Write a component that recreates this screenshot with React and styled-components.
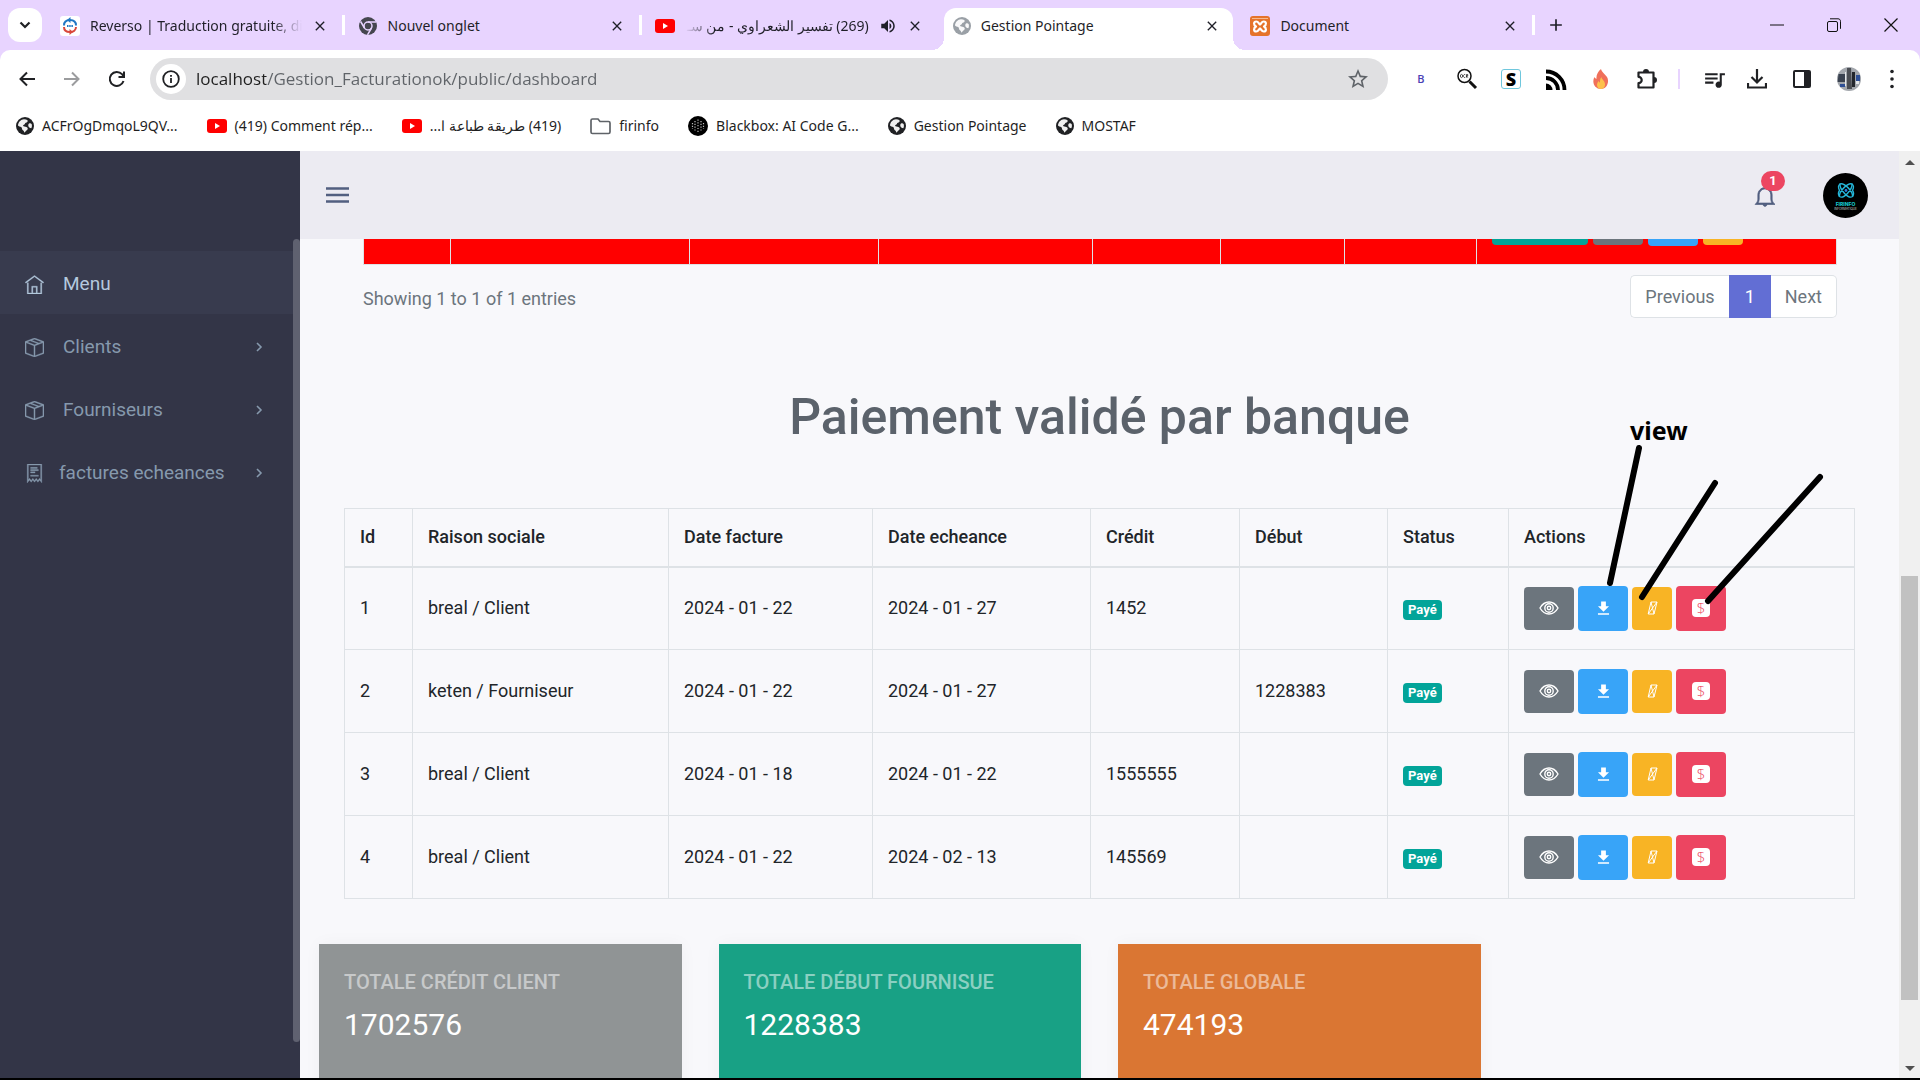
import React from "react";
import styled, { createGlobalStyle, css } from "styled-components";
import { TfiHome, TfiPackage, TfiReceipt, TfiBell } from "react-icons/tfi";
import { MdStarBorder, MdQueueMusic, MdVolumeUp, MdClose, MdAdd } from "react-icons/md";

const ui = `"Noto Sans", "Open Sans", sans-serif`;
const body = `Roboto, "Liberation Sans", sans-serif`;

const Global = createGlobalStyle`
  *, *::before, *::after { box-sizing: border-box; }
  body { margin: 0; background: #000; font-family: ${body}; }
  button, input { font: inherit; color: inherit; }
  button { border: 0; padding: 0; background: none; cursor: pointer; }
  a { color: inherit; text-decoration: none; }
  svg { display: block; flex: none; }
`;

const Window = styled.div`
  height: 100vh;
  display: flex;
  flex-direction: column;
  overflow: hidden;
  border-bottom: 2px solid #000;
  background: #fff;
`;

/* ---------- browser tabs ---------- */

const TabStrip = styled.div`
  display: flex;
  align-items: flex-start;
  height: 50px;
  padding-top: 8px;
  background: #e8d4ff;
  font-family: ${ui};
  font-size: 14px;
  color: #1f1f28;
`;

const TabSearch = styled.button`
  width: 34px;
  height: 34px;
  margin: 0 5px 0 8px;
  display: grid;
  place-items: center;
  border-radius: 12px;
  background: #fff;
`;

const Tabs = styled.div`
  display: flex;
  flex: 0 1 1488px;
  min-width: 0;
  height: 42px;
`;

const TabItem = styled.div`
  position: relative;
  flex: 1;
  min-width: 0;
  height: 42px;
  display: flex;
  align-items: center;
  padding: 0 17px 7px 13px;
  ${(p) =>
    p.$line &&
    css`
      &::after {
        content: "";
        position: absolute;
        right: 0;
        top: 7px;
        width: 3px;
        height: 20px;
        background: #fff;
      }
    `}
  ${(p) =>
    p.$active &&
    css`
      &::before {
        content: "";
        position: absolute;
        inset: 0 4px 0 4px;
        border-radius: 12px 12px 0 0;
        background: #fff;
      }
      &::after {
        content: "";
        position: absolute;
        left: -8px;
        right: -8px;
        bottom: 0;
        height: 12px;
        background:
          radial-gradient(circle at 0 0, transparent 12px, #fff 12px) left / 12px 12px no-repeat,
          radial-gradient(circle at 100% 0, transparent 12px, #fff 12px) right / 12px 12px no-repeat;
      }
    `}
`;

const TabLink = styled.a`
  position: relative;
  z-index: 1;
  flex: 1;
  min-width: 0;
  display: flex;
  align-items: center;
  gap: 10px;
`;

const TabTitle = styled.span`
  flex: 1;
  min-width: 0;
  overflow: hidden;
  white-space: nowrap;
  line-height: 24px;
  mask-image: ${(p) =>
    p.$fade === "right"
      ? "linear-gradient(to left, transparent, #000 30px)"
      : p.$fade === "left"
        ? "linear-gradient(to right, transparent, #000 30px)"
        : "none"};
`;

const TabClose = styled.button`
  position: relative;
  z-index: 1;
  width: 16px;
  height: 16px;
  margin-left: 10px;
`;

const NewTab = styled.button`
  width: 20px;
  height: 20px;
  margin: 7px 0 0 11px;
`;

const WindowControls = styled.div`
  display: flex;
  gap: 39px;
  margin: 7px 20px 0 auto;
`;

const ControlButton = styled.button`
  width: 18px;
  height: 20px;
  display: grid;
  place-items: center;
`;

/* ---------- address bar ---------- */

const ToolbarBack = styled.div`
  background: #e8d4ff;
`;

const Toolbar = styled.div`
  display: flex;
  align-items: center;
  height: 58px;
  padding: 0 18px 0 17px;
  border-radius: 10px 10px 0 0;
  background: #fff;
`;

const NavButtons = styled.div`
  display: flex;
  gap: 25px;
  margin-right: 23px;
`;

const IconButton = styled.button`
  width: 20px;
  height: 24px;
  display: grid;
  place-items: center;
  color: ${(p) => p.$color || "#202124"};
`;

const Omnibox = styled.label`
  flex: 1;
  height: 42px;
  display: flex;
  align-items: center;
  gap: 10px;
  padding: 0 18px 0 6px;
  border-radius: 21px;
  background: #e0e0e2;
  color: #5f6368;
`;

const SiteInfo = styled.span`
  width: 30px;
  height: 30px;
  display: grid;
  place-items: center;
  border-radius: 50%;
  background: #fff;
`;

const Address = styled.input`
  flex: 1;
  min-width: 0;
  padding: 0;
  border: 0;
  outline: 0;
  font-family: "Open Sans", "Noto Sans", sans-serif;
  font-size: 17px;
  line-height: 24px;
  color: transparent;
  background: linear-gradient(90deg, #1f1f1f 70px, #5f6368 70px);
  background-clip: text;
  -webkit-background-clip: text;
`;

const Extensions = styled.div`
  display: flex;
  align-items: center;
  gap: 25px;
  margin-left: 23px;
`;

const Divider = styled.span`
  width: 2px;
  height: 20px;
  margin: 0 -3px;
  background: #e8d4ff;
`;

const LetterIcon = styled.span`
  width: 20px;
  height: 20px;
  display: grid;
  place-items: center;
  font: ${(p) => (p.$boxed ? "800 18px" : "600 11px")} / 18px "Open Sans", sans-serif;
  color: ${(p) => (p.$boxed ? "#000" : "#4a3fb5")};
  border: ${(p) => (p.$boxed ? "1px solid #6fc7dd" : "0")};
  border-radius: 3px;
`;

/* ---------- bookmarks ---------- */

const Bookmarks = styled.nav`
  display: flex;
  align-items: center;
  gap: 29px;
  height: 43px;
  padding: 0 0 7px 16px;
  background: #fff;
  font-family: ${ui};
  font-size: 14px;
  line-height: 24px;
  color: #1f1f1f;
  white-space: nowrap;
`;

const Bookmark = styled.a`
  display: flex;
  align-items: center;
  gap: 8px;
`;

/* ---------- application ---------- */

const Viewport = styled.div`
  flex: 1;
  min-height: 0;
  display: flex;
`;

const Sidebar = styled.aside`
  flex: 0 0 300px;
  padding-top: 88px;
  background: #333547;
`;

const SideScroll = styled.div`
  display: flex;
  height: 100%;
`;

const Menu = styled.nav`
  flex: 1;
  padding-top: 12px;
`;

const MenuItem = styled.a`
  display: flex;
  align-items: center;
  gap: ${(p) => (p.$tight ? "15px" : "19px")};
  height: 63px;
  padding: 3px 30px 0 25px;
  font-size: 19px;
  line-height: 24px;
  color: ${(p) => (p.$active ? "#b4c9de" : "#8699ad")};
  background: ${(p) => (p.$active ? "#383b4e" : "transparent")};
`;

const MenuText = styled.span`
  flex: 1;
`;

const SideThumb = styled.span`
  width: 7px;
  height: 803px;
  border-radius: 7px;
  background: #5f6170;
`;

const Main = styled.main`
  flex: 1;
  min-width: 0;
  display: flex;
  flex-direction: column;
  background: #f8f8fb;
`;

const Topbar = styled.header`
  display: flex;
  align-items: center;
  flex: none;
  height: 88px;
  padding: 1px 31px 0 26px;
  background: #ecebf2;
  color: #525f80;
`;

const Notifications = styled.button`
  position: relative;
  margin: 0 47px 0 auto;
`;

const Count = styled.span`
  position: absolute;
  left: 7px;
  top: -14px;
  width: 24px;
  height: 20px;
  border-radius: 10px;
  background: #ec4561;
  color: #fff;
  font-size: 13px;
  font-weight: 700;
  line-height: 20px;
`;

const Scroller = styled.div`
  position: relative;
  flex: 1;
  min-height: 0;
  overflow: hidden;
`;

const Scrolled = styled.div`
  margin-top: -58px;
`;

const Pending = styled.section`
  padding: 0 62px 0 63px;
`;

const Paid = styled.section`
  padding: 0 44px;
`;

const DataTable = styled.table`
  width: 100%;
  table-layout: fixed;
  border-collapse: collapse;
  font-size: 18px;
  line-height: 24px;
  color: #212529;
  background: ${(p) => (p.$late ? "#ff0000" : "transparent")};

  th,
  td {
    height: 83px;
    padding: 0 15px;
    border: 1px solid #dee2e6;
    text-align: left;
    vertical-align: middle;
    white-space: nowrap;
  }
  th {
    height: 58px;
    padding-bottom: 1px;
    border-bottom-width: 2px;
    font-weight: 500;
  }
`;

const Badge = styled.span`
  display: inline-block;
  height: 20px;
  padding: 0 5px;
  border-radius: 4px;
  background: #02a499;
  color: #fff;
  font-size: 13px;
  font-weight: 700;
  line-height: 20px;
`;

const Actions = styled.div`
  display: flex;
  align-items: center;
  gap: ${(p) => (p.$wide ? "5px" : "4px")};
`;

const tones = {
  green: "#02a499",
  gray: "#6c757d",
  blue: "#38a4f8",
  yellow: "#f8b425",
  red: "#ec4561",
};

const ActionButton = styled.button`
  display: grid;
  place-items: center;
  width: ${(p) => p.$width || 50}px;
  height: ${(p) => (p.$tall ? 45 : 43)}px;
  border-radius: 4px;
  background: ${(p) => tones[p.$tone]};
  color: #fff;
`;

const Dollar = styled.span`
  width: 18px;
  height: 18px;
  border-radius: 4px;
  background: #fff;
  color: #ec4561;
  font: 300 15px / 18px "Open Sans", sans-serif;
`;

const TableFooter = styled.div`
  display: flex;
  align-items: center;
  justify-content: space-between;
  margin-top: 10px;
  font-size: 18px;
  line-height: 24px;
  color: #6c757d;
`;

const Showing = styled.span`
  padding-top: 5px;
`;

const Pager = styled.nav`
  display: flex;
  height: 43px;
`;

const PageLink = styled.a`
  padding: 9px ${(p) => (p.$active ? 15 : 14)}px;
  border: 1px solid ${(p) => (p.$active ? "#626ed4" : "#dee2e6")};
  background: ${(p) => (p.$active ? "#626ed4" : "#fff")};
  color: ${(p) => (p.$active ? "#fff" : "#6c757d")};
  &:first-child {
    border-right: 0;
    border-radius: 5px 0 0 5px;
  }
  &:last-child {
    border-left: 0;
    border-radius: 0 5px 5px 0;
  }
`;

const Title = styled.h1`
  margin: 69px 0 61px;
  text-align: center;
  font-size: 50px;
  font-weight: 500;
  line-height: 60px;
  color: #5b626b;
`;

const Cards = styled.section`
  display: grid;
  grid-template-columns: repeat(4, 1fr);
  gap: 37px;
  padding: 45px 19px 0;
`;

const cardTones = { gray: "#909495", green: "#18a185", orange: "#da7633" };

const Card = styled.article`
  padding: 24px 25px;
  height: 200px;
  background: ${(p) => cardTones[p.$tone]};
  box-shadow: 0 0 16px rgba(0, 0, 0, 0.04);
`;

const CardLabel = styled.h2`
  margin: 0 0 13px;
  font-size: 20px;
  font-weight: 500;
  line-height: 28px;
  text-transform: uppercase;
  color: rgba(255, 255, 255, 0.5);
`;

const CardValue = styled.p`
  margin: 0;
  font-size: 30px;
  line-height: 32px;
  color: #fff;
`;

/* hand-drawn notes lying over the page */
const Notes = styled.div`
  position: absolute;
  top: 178px;
  right: 79px;
  width: 210px;
  svg { overflow: visible; }
`;

const NoteText = styled.span`
  display: block;
  padding: 0 0 3px 20px;
  font: 700 25px / 26px "Noto Sans", sans-serif;
  color: #000;
`;

const Scrollbar = styled.div`
  flex: 0 0 21px;
  display: flex;
  flex-direction: column;
  align-items: center;
  padding: 9px 0 7px;
  background: #f0f0f0;
  color: #505050;
`;

const Track = styled.div`
  flex: 1;
  display: grid;
  grid-template-rows: 411fr 424fr 66fr;
`;

const Thumb = styled.span`
  grid-row: 2;
  width: 17px;
  background: #c1c1c1;
`;

/* ---------- drawings ---------- */

const Globe = ({ color = "#202124" }) => (
  <svg width="18" height="18" viewBox="0 0 18 18">
    <circle cx="9" cy="9" r="9" fill={color} />
    <path d="M8 2.2c3 .2 4 .8 3.600 2.200-.3 1-1.700 1-2.300 1.700-.5.7-.2 1.300-1.300 1.600-1 .3-1.200 1-.4 1.600 1 .6 2.600.4 3.600 1.200 1.100.9.4 2.400-.8 3.100-1 .6-1 1.900-2.300 2 .2-1.500-.6-2-1.500-2.700-.9-.8-.3-2-1.400-2.800C4.100 9.400 2.600 9.500 2 8.500 2.200 5 4.700 2.500 8 2.200Z" fill="#fff" opacity=".93" />
    <path d="M13 6.500c1-.5 2-.3 2.600.5.500 1.500.4 3-.3 4.300-1.500-.3-2.800-1-3-2.500-.1-1 .1-1.900.7-2.300Z" fill="#fff" opacity=".93" />
  </svg>
);

const YouTube = () => (
  <svg width="20" height="14" viewBox="0 0 20 14">
    <rect width="20" height="14" rx="3" fill="#f00" />
    <path d="M8 4v6l5-3z" fill="#fff" />
  </svg>
);

const Reverso = () => (
  <svg width="20" height="20" viewBox="0 0 20 20">
    <rect width="20" height="20" rx="3" fill="#fff" />
    <path d="M4 9.500C4 6 6.500 4 10 4s6 2 6 5.500" fill="none" stroke="#2178c4" strokeWidth="2" />
    <path d="M10.500 1 7 4l3.500 3z" fill="#2178c4" />
    <path d="M4 11c0 3.500 2.500 5 6 5s6-2 6-5" fill="none" stroke="#d9483b" strokeWidth="2" />
    <path d="M9.500 13 13 16l-3.500 3z" fill="#d9483b" />
    <path d="M7 10h6" stroke="#2178c4" strokeWidth="2" strokeDasharray="1.500 .7" />
  </svg>
);

const ChromeMark = () => (
  <svg width="20" height="20" viewBox="0 0 20 20">
    <circle cx="10" cy="10" r="9" fill="#45464f" />
    <circle cx="10" cy="10" r="4" fill="#45464f" stroke="#e8d4ff" strokeWidth="1.500" />
    <path d="M10 6h8M6.500 12 2.600 5.500M13.500 12 9.500 18.800" stroke="#e8d4ff" strokeWidth="1.500" />
  </svg>
);

const Xampp = () => (
  <svg width="20" height="20" viewBox="0 0 20 20">
    <rect width="20" height="20" rx="3" fill="#e5732a" />
    <path d="M2 2.500h16" stroke="#f6b98e" strokeWidth="1" />
    <path d="M10 8.500C8.500 7.500 8.500 5.500 6.300 5.500 3.500 5.500 3.300 9 6 10.500 3.300 12 3.500 15.500 6.300 15.500c2.200 0 2.200-2 3.700-3 1.500 1 1.500 3 3.700 3 2.800 0 3-3.500.3-5 2.700-1.500 2.500-5-.3-5-2.200 0-2.200 2-3.700 3Z" fill="none" stroke="#fff" strokeWidth="2.200" strokeLinejoin="round" />
  </svg>
);

const Folder = () => (
  <svg width="21" height="18" viewBox="0 0 21 18">
    <path d="M1 3.500C1 2.500 1.700 2 2.500 2H8l2 2.500h8.500c.8 0 1.500.5 1.500 1.500v9c0 .8-.7 1.500-1.500 1.500h-16C1.700 16.500 1 15.800 1 15z" fill="none" stroke="#5f6368" strokeWidth="1.700" />
  </svg>
);

const Blackbox = () => (
  <svg width="20" height="20" viewBox="0 0 20 20">
    <circle cx="10" cy="10" r="10" fill="#000" />
    <g stroke="#bbb" strokeWidth="1.200" strokeDasharray="1.200 1.600">
      <path d="M10 3.500v13M7 5v10M13 5v10M4.500 7v6M15.500 7v6" />
    </g>
  </svg>
);

const Arrow = ({ flip }) => (
  <svg width="18" height="16" viewBox="0 0 18 16" fill="none" stroke="currentColor" strokeWidth="2">
    <path d={flip ? "M1 8h14.500M9 1.500 15.500 8 9 14.500" : "M17 8H2.500M9 1.500 2.500 8 9 14.500"} />
  </svg>
);

const Reload = () => (
  <svg width="18" height="18" viewBox="0 0 18 18" fill="none" stroke="currentColor" strokeWidth="2">
    <path d="M15.500 11A7 7 0 1 1 14 4.200L15.500 6" />
    <path d="M16 1.500V7h-5.500" />
  </svg>
);

const InfoMark = () => (
  <svg width="18" height="18" viewBox="0 0 18 18" fill="none" stroke="#202124" strokeWidth="1.800">
    <circle cx="9" cy="9" r="7.800" />
    <path d="M9 8v5M9 5v1.800" />
  </svg>
);

const Lens = () => (
  <svg width="22" height="22" viewBox="0 0 22 22" fill="none" stroke="#111">
    <circle cx="8.500" cy="8" r="6.500" strokeWidth="1.500" fill="#fff" />
    <path d="M13.500 13.500 20 20" strokeWidth="3" />
    <g strokeWidth=".7">
      <ellipse cx="5.500" cy="8" rx="1.100" ry="1.600" />
      <path d="M9.300 6.700a1.300 1.500 0 1 0 0 2.600M10.500 9.600V6.500h1.200v1.500h-1.200l1.300 1.600" />
    </g>
  </svg>
);

const Feed = () => (
  <svg width="21" height="21" viewBox="0 0 21 21" fill="none" stroke="#000" strokeWidth="3.800">
    <path d="M0 2.500A18.500 18.500 0 0 1 18.500 21M0 9A12 12 0 0 1 12 21" />
    <path d="M0 14.500A6.500 6.500 0 0 1 6.500 21H0z" fill="#000" stroke="none" />
  </svg>
);

const Flame = () => (
  <svg width="18" height="20" viewBox="0 0 18 20">
    <path d="M9 0c.5 3 4 5 6 8 2.500 4 .5 12-6 12S-.5 13 2.500 8C3 9 3.500 9.500 4.500 10 4 6 6 2.500 9 0Z" fill="#f0705a" />
    <path d="M9.500 8c0 2.500 4 4 3.500 8-.3 2.500-2 4-4 4s-4-1.500-4-4c0-2 1-3 1.500-4 .5 1 1 1.500 1.500 1.500C8 11.500 8 9.500 9.500 8Z" fill="#fdc14b" />
  </svg>
);

const Puzzle = () => (
  <svg width="22" height="22" viewBox="0 0 22 22">
    <path d="M2.500 4.500h15v15h-15v-4.300a3.200 3.200 0 0 0 0-6.400z" fill="none" stroke="#202124" strokeWidth="2.200" strokeLinejoin="round" />
    <path d="M7 4a3 3 0 0 1 6 0zM18 9a3 3 0 0 1 0 6z" fill="#202124" />
  </svg>
);

const Tray = () => (
  <svg width="20" height="20" viewBox="0 0 20 20" fill="none" stroke="currentColor" strokeWidth="2.200">
    <path d="M10 0v13M4.500 8 10 13.500 15.500 8M1 14v4.500h18V14" />
  </svg>
);

const Panel = () => (
  <svg width="18" height="18" viewBox="0 0 18 18">
    <rect x="1" y="1" width="16" height="16" rx="1" fill="none" stroke="#202124" strokeWidth="2" />
    <path d="M11 1h6v16h-6z" fill="#202124" />
  </svg>
);

const Avatar = () => (
  <svg width="24" height="24" viewBox="0 0 24 24">
    <circle cx="12" cy="12" r="12" fill="#a3a7ad" />
    <path d="M1.500 7H8v8H.6z" fill="#3a4250" />
    <path d="M10 1h4l1 21h-5z" fill="#4a4d53" />
    <path d="M15 5h3v15h-3z" fill="#23262c" />
    <path d="M3 17h5v3H3zM19 8h4v6h-4z" fill="#2e4f95" />
    <path d="M8 5h1v14H8zM19 14h3v3h-3z" fill="#e5e7ea" />
  </svg>
);

const Dots = () => (
  <svg width="6" height="20" viewBox="0 0 6 20" fill="#202124">
    <circle cx="3" cy="2.500" r="1.800" />
    <circle cx="3" cy="10" r="1.800" />
    <circle cx="3" cy="17.500" r="1.800" />
  </svg>
);

const Burger = () => (
  <svg width="23" height="17" viewBox="0 0 23 17" stroke="#525f80" strokeWidth="2.400">
    <path d="M0 1.500h23M0 8h23M0 14.500h23" />
  </svg>
);

const Brand = () => (
  <svg width="45" height="45" viewBox="0 0 45 45">
    <circle cx="22.500" cy="22.500" r="22.500" fill="#000" />
    <g fill="none" stroke="#25b6d8" strokeWidth="1.400">
      <path d="M17 11c4-1.500 13 7 12.500 12.500-4 3-13-7-12.500-12.500ZM29 11c-4-1.500-13 7-12.500 12.500 4 3 13-7 12.500-12.500Z" />
      <path d="M17 11c-2.500 2-1.500 4.500-.5 6.500-1 1.500-1.500 4 0 6M29 11c2.500 2 1.500 4.500.5 6.500 1 1.500 1.500 4 0 6" />
    </g>
    <circle cx="23" cy="17.500" r="1.400" fill="#2a7be0" />
    <text x="22.500" y="32.500" textAnchor="middle" fontFamily="Inter, sans-serif" fontWeight="800" fontSize="5" fill="#16c3c8">FIRINFO</text>
    <text x="22.500" y="36.500" textAnchor="middle" fontFamily="Inter, sans-serif" fontSize="3" fill="#ccc">INFORMATIQUE</text>
  </svg>
);

const Chevron = () => (
  <svg width="7" height="10" viewBox="0 0 7 10" fill="none" stroke="currentColor" strokeWidth="1.600">
    <path d="m1 1 4 4-4 4" />
  </svg>
);

const Eye = () => (
  <svg width="20" height="14" viewBox="0 0 20 14" fill="none" stroke="#fff" strokeWidth="1.400">
    <path d="M1 7c2-3.500 5.500-6 9-6s7 2.500 9 6c-2 3.500-5.500 6-9 6S3 10.500 1 7Z" />
    <circle cx="10" cy="7" r="4.200" />
    <circle cx="10" cy="7" r="1.700" />
  </svg>
);

const Download = () => (
  <svg width="19" height="19" viewBox="0 0 24 24" fill="#fff">
    <path d="M5 20h14v-2H5m14-9h-4V3H9v6H5l7 7 7-7z" />
  </svg>
);

const Missing = () => (
  <svg width="12" height="14" viewBox="0 0 12 14" fill="none" stroke="#fff" strokeWidth="1">
    <path d="M5 1h6L8 13H2.200zM5 1l3 12M11 1 2.200 13" />
  </svg>
);

/* ---------- data ---------- */

const invoices = [
  { id: 1, name: "breal / Client", date: "2024 - 01 - 22", due: "2024 - 01 - 27", credit: "1452", debit: "" },
  { id: 2, name: "keten / Fourniseur", date: "2024 - 01 - 22", due: "2024 - 01 - 27", credit: "", debit: "1228383" },
  { id: 3, name: "breal / Client", date: "2024 - 01 - 18", due: "2024 - 01 - 22", credit: "1555555", debit: "" },
  { id: 4, name: "breal / Client", date: "2024 - 01 - 22", due: "2024 - 02 - 13", credit: "145569", debit: "" },
];

const headings = ["Id", "Raison sociale", "Date facture", "Date echeance", "Crédit", "Début", "Status", "Actions"];
const paidColumns = [68, 256, 204, 218, 149, 148, 121, 346];
const pendingColumns = [87, 239, 189, 214, 128, 124, 132, 360];

const Columns = ({ widths }) => (
  <colgroup>
    {widths.map((w, i) => (
      <col key={i} width={w} />
    ))}
  </colgroup>
);

const Tab = ({ icon, title, fade, rtl, sound, ...rest }) => (
  <TabItem {...rest}>
    <TabLink href="#">
      {icon}
      <TabTitle $fade={fade} dir={rtl ? "rtl" : "ltr"}>{title}</TabTitle>
      {sound && <MdVolumeUp size={18} />}
    </TabLink>
    <TabClose aria-label="Fermer"><MdClose size={16} /></TabClose>
  </TabItem>
);

export default function App() {
  return (
    <Window>
      <Global />
      <TabStrip>
        <TabSearch aria-label="Rechercher">
          <svg width="12" height="8" viewBox="0 0 12 8" fill="none" stroke="#202124" strokeWidth="2.200"><path d="m1.500 1.500 4.500 4.500 4.500-4.500" /></svg>
        </TabSearch>
        <Tabs>
          <Tab icon={<Reverso />} title="Reverso | Traduction gratuite, di" fade="right" $line />
          <Tab icon={<ChromeMark />} title="Nouvel onglet" $line />
          <Tab icon={<YouTube />} title="(269) تفسير الشعراوي - من سـ" fade="left" rtl sound />
          <Tab icon={<Globe color="#9aa0a6" />} title="Gestion Pointage" $active />
          <Tab icon={<Xampp />} title="Document" $line />
        </Tabs>
        <NewTab aria-label="Nouvel onglet"><MdAdd size={20} /></NewTab>
        <WindowControls>
          <ControlButton aria-label="Réduire"><svg width="14" height="2"><path d="M0 1h14" stroke="#111" /></svg></ControlButton>
          <ControlButton aria-label="Restaurer">
            <svg width="14" height="14" fill="none" stroke="#111"><rect x=".5" y="3.500" width="10" height="10" rx="1.500" /><path d="M3 .8h8c1.500 0 2.500 1 2.500 2.500v7.500" /></svg>
          </ControlButton>
          <ControlButton aria-label="Fermer la fenêtre"><svg width="14" height="14"><path d="m.5.5 13 13m0-13-13 13" stroke="#111" strokeWidth="1.200" /></svg></ControlButton>
        </WindowControls>
      </TabStrip>

      <ToolbarBack>
        <Toolbar>
          <NavButtons>
            <IconButton aria-label="Précédent"><Arrow /></IconButton>
            <IconButton aria-label="Suivant" $color="#9b9c9e"><Arrow flip /></IconButton>
            <IconButton aria-label="Actualiser"><Reload /></IconButton>
          </NavButtons>
          <Omnibox>
            <SiteInfo><InfoMark /></SiteInfo>
            <Address aria-label="Adresse" defaultValue="localhost/Gestion_Facturationok/public/dashboard" />
            <MdStarBorder size={24} />
          </Omnibox>
          <Extensions>
            <LetterIcon>B</LetterIcon>
            <IconButton aria-label="OCR"><Lens /></IconButton>
            <LetterIcon $boxed>S</LetterIcon>
            <IconButton aria-label="Flux"><Feed /></IconButton>
            <IconButton aria-label="Flamme"><Flame /></IconButton>
            <IconButton aria-label="Extensions"><Puzzle /></IconButton>
            <Divider />
            <IconButton aria-label="Médias"><MdQueueMusic size={25} /></IconButton>
            <IconButton aria-label="Téléchargements"><Tray /></IconButton>
            <IconButton aria-label="Panneau latéral"><Panel /></IconButton>
            <IconButton aria-label="Profil"><Avatar /></IconButton>
            <IconButton aria-label="Menu"><Dots /></IconButton>
          </Extensions>
        </Toolbar>
      </ToolbarBack>

      <Bookmarks>
        <Bookmark href="#"><Globe />ACFrOgDmqoL9QV...</Bookmark>
        <Bookmark href="#"><YouTube />(419) Comment rép...</Bookmark>
        <Bookmark href="#"><YouTube /><span dir="rtl">(419) طريقة طباعة ا...</span></Bookmark>
        <Bookmark href="#"><Folder />firinfo</Bookmark>
        <Bookmark href="#"><Blackbox />Blackbox: AI Code G...</Bookmark>
        <Bookmark href="#"><Globe />Gestion Pointage</Bookmark>
        <Bookmark href="#"><Globe />MOSTAF</Bookmark>
      </Bookmarks>

      <Viewport>
        <Sidebar>
          <SideScroll>
            <Menu>
              <MenuItem href="#" $active><TfiHome size={19} stroke="currentColor" strokeWidth=".3" /><MenuText>Menu</MenuText></MenuItem>
              <MenuItem href="#"><TfiPackage size={19} stroke="currentColor" strokeWidth=".3" /><MenuText>Clients</MenuText><Chevron /></MenuItem>
              <MenuItem href="#"><TfiPackage size={19} stroke="currentColor" strokeWidth=".3" /><MenuText>Fourniseurs</MenuText><Chevron /></MenuItem>
              <MenuItem href="#" $tight><TfiReceipt size={19} stroke="currentColor" strokeWidth=".3" /><MenuText>factures echeances</MenuText><Chevron /></MenuItem>
            </Menu>
            <SideThumb />
          </SideScroll>
        </Sidebar>

        <Main>
          <Topbar>
            <button aria-label="Afficher le menu"><Burger /></button>
            <Notifications aria-label="Notifications">
              <TfiBell size={22} stroke="currentColor" strokeWidth=".6" />
              <Count>1</Count>
            </Notifications>
            <button aria-label="Profil Firinfo"><Brand /></button>
          </Topbar>

          <Scroller>
            <Scrolled>
              <Pending>
                <DataTable $late>
                  <Columns widths={pendingColumns} />
                  <tbody>
                    <tr>
                      {pendingColumns.slice(1).map((w) => <td key={w} />)}
                      <td>
                        <Actions $wide>
                          <ActionButton $tone="green" $width={96} aria-label="Valider" />
                          <ActionButton $tone="gray" aria-label="Voir" />
                          <ActionButton $tone="blue" $tall aria-label="Télécharger" />
                          <ActionButton $tone="yellow" $width={40} aria-label="Modifier" />
                        </Actions>
                      </td>
                    </tr>
                  </tbody>
                </DataTable>
                <TableFooter>
                  <Showing>Showing 1 to 1 of 1 entries</Showing>
                  <Pager>
                    <PageLink href="#">Previous</PageLink>
                    <PageLink href="#" $active>1</PageLink>
                    <PageLink href="#">Next</PageLink>
                  </Pager>
                </TableFooter>
              </Pending>

              <Title>Paiement validé par banque</Title>

              <Paid>
                <DataTable>
                  <Columns widths={paidColumns} />
                  <thead>
                    <tr>{headings.map((h) => <th key={h}>{h}</th>)}</tr>
                  </thead>
                  <tbody>
                    {invoices.map((row) => (
                      <tr key={row.id}>
                        <td>{row.id}</td>
                        <td>{row.name}</td>
                        <td>{row.date}</td>
                        <td>{row.due}</td>
                        <td>{row.credit}</td>
                        <td>{row.debit}</td>
                        <td><Badge>Payé</Badge></td>
                        <td>
                          <Actions>
                            <ActionButton $tone="gray" aria-label="Voir"><Eye /></ActionButton>
                            <ActionButton $tone="blue" $tall aria-label="Télécharger"><Download /></ActionButton>
                            <ActionButton $tone="yellow" $width={40} aria-label="Modifier"><Missing /></ActionButton>
                            <ActionButton $tone="red" $tall aria-label="Paiement"><Dollar>$</Dollar></ActionButton>
                          </Actions>
                        </td>
                      </tr>
                    ))}
                  </tbody>
                </DataTable>
              </Paid>

              <Cards>
                <Card $tone="gray"><CardLabel>Totale crédit client</CardLabel><CardValue>1702576</CardValue></Card>
                <Card $tone="green"><CardLabel>Totale début fournisue</CardLabel><CardValue>1228383</CardValue></Card>
                <Card $tone="orange"><CardLabel>Totale globale</CardLabel><CardValue>474193</CardValue></Card>
              </Cards>
            </Scrolled>

            <Notes>
              <NoteText>view</NoteText>
              <svg width="210" height="160" fill="none" stroke="#000" strokeWidth="6" strokeLinecap="round">
                <path d="M29 2 0 137M105 37 32 151M210 31 98 155" />
              </svg>
            </Notes>
          </Scroller>
        </Main>

        <Scrollbar>
          <svg width="10" height="5"><path d="M0 5 5 0l5 5z" fill="currentColor" /></svg>
          <Track><Thumb /></Track>
          <svg width="10" height="5"><path d="m0 0 5 5 5-5z" fill="currentColor" /></svg>
        </Scrollbar>
      </Viewport>
    </Window>
  );
}
